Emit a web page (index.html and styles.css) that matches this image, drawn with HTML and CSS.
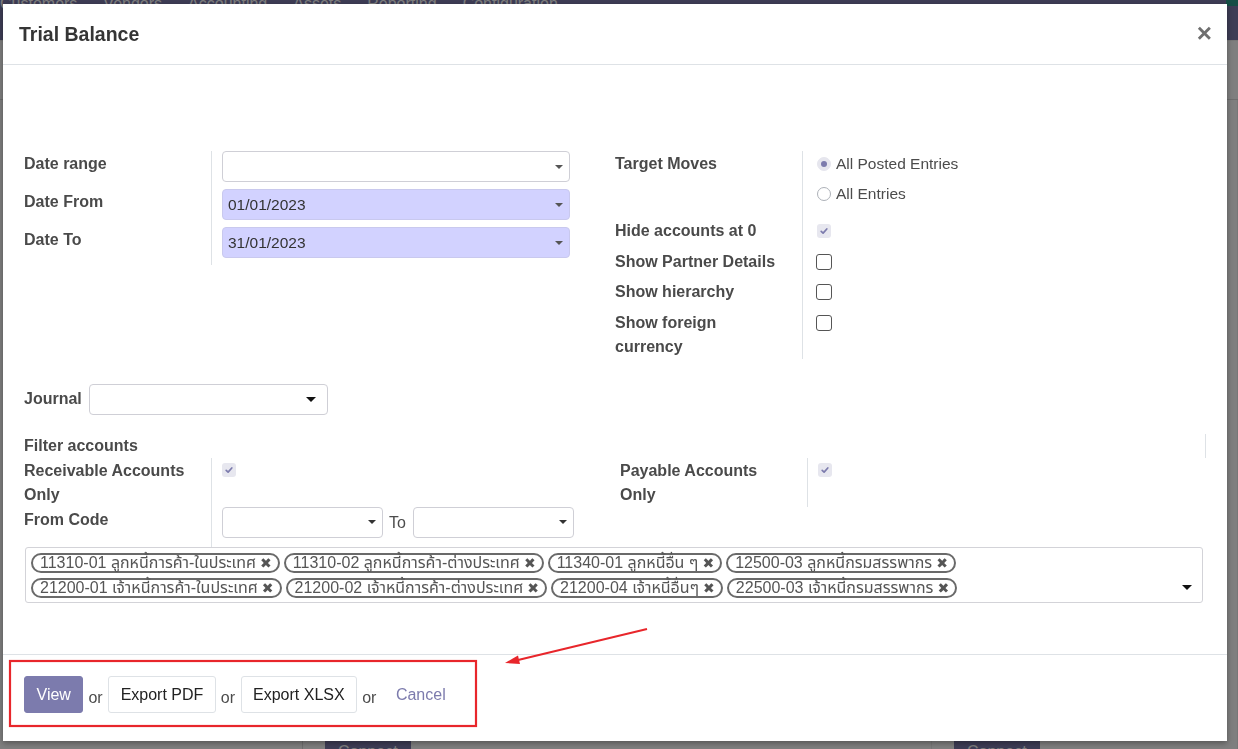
FILE: index.html
```html
<!DOCTYPE html>
<html lang="en">
<head>
<meta charset="utf-8">
<title>Trial Balance</title>
<link rel="stylesheet" href="styles.css">
</head>
<body>
<div class="app">
  <nav class="navbar">
    <ul class="menu">
      <li>Customers</li><li>Vendors</li><li>Accounting</li><li>Assets</li><li>Reporting</li><li>Configuration</li>
    </ul>
    <span class="avatar"></span>
  </nav>
  <div class="control-panel"></div>
  <div class="dashboard">
    <div class="side"></div>
    <div class="card"><span class="btn-connect">Connect</span></div>
    <div class="card"><span class="btn-connect">Connect</span></div>
  </div>
</div>
<div class="backdrop"></div>

<div class="modal" role="dialog">
  <header class="modal-header">
    <h4 class="modal-title">Trial Balance</h4>
    <button class="close" type="button">×</button>
  </header>

  <div class="modal-body">
    <div class="form-cols">
      <div class="group group-left">
        <label class="lbl">Date range</label>
        <div class="fld fld-input"><div class="select"><span class="val"></span><i class="caret"></i></div></div>
        <label class="lbl">Date From</label>
        <div class="fld fld-input"><div class="select date"><span class="val">01/01/2023</span><i class="caret"></i></div></div>
        <label class="lbl">Date To</label>
        <div class="fld fld-input"><div class="select date"><span class="val">31/01/2023</span><i class="caret"></i></div></div>
      </div>
      <div class="group group-right">
        <label class="lbl">Target Moves</label>
        <div class="fld fld-radios">
          <div class="radio-item"><span class="radio on"></span>All Posted Entries</div>
          <div class="radio-item"><span class="radio"></span>All Entries</div>
        </div>
        <label class="lbl">Hide accounts at 0</label>
        <div class="fld fld-cb"><span class="cb on"><svg viewBox="0 0 14 14"><path d="M4.2 7.3 L6.1 9.1 L9.8 5" fill="none" stroke="#7c7bad" stroke-width="1.7" stroke-linecap="round" stroke-linejoin="round"/></svg></span></div>
        <label class="lbl">Show Partner Details</label>
        <div class="fld fld-cb"><span class="cb"></span></div>
        <label class="lbl">Show hierarchy</label>
        <div class="fld fld-cb"><span class="cb"></span></div>
        <label class="lbl">Show foreign currency</label>
        <div class="fld fld-cb last"><span class="cb"></span></div>
      </div>
    </div>

    <div class="journal-row">
      <label class="lbl">Journal</label>
      <div class="select journal"><span class="val"></span><i class="caret dark"></i></div>
    </div>

    <div class="filter-title">
      <span class="lbl">Filter accounts</span>
      <span class="vsep"></span>
    </div>

    <div class="form-cols cols-2">
      <div class="group group-left2">
        <label class="lbl">Receivable Accounts Only</label>
        <div class="fld fld-cb2"><span class="cb on"><svg viewBox="0 0 14 14"><path d="M4.2 7.3 L6.1 9.1 L9.8 5" fill="none" stroke="#7c7bad" stroke-width="1.7" stroke-linecap="round" stroke-linejoin="round"/></svg></span></div>
        <label class="lbl">From Code</label>
        <div class="fld fld-code">
          <div class="select code"><span class="val"></span><i class="caret"></i></div>
          <span class="to">To</span>
          <div class="select code"><span class="val"></span><i class="caret"></i></div>
        </div>
      </div>
      <div class="group group-right2">
        <label class="lbl">Payable Accounts Only</label>
        <div class="fld fld-cb2"><span class="cb on"><svg viewBox="0 0 14 14"><path d="M4.2 7.3 L6.1 9.1 L9.8 5" fill="none" stroke="#7c7bad" stroke-width="1.7" stroke-linecap="round" stroke-linejoin="round"/></svg></span></div>
      </div>
    </div>

    <div class="tags-box">
      <div class="tag-rows">
        <div class="tag-row">
          <span class="tag">11310-01 ลูกหนี้การค้า-ในประเทศ <b>✖</b></span>
          <span class="tag">11310-02 ลูกหนี้การค้า-ต่างประเทศ <b>✖</b></span>
          <span class="tag">11340-01 ลูกหนี้อื่น ๆ <b>✖</b></span>
          <span class="tag">12500-03 ลูกหนี้กรมสรรพากร <b>✖</b></span>
        </div>
        <div class="tag-row">
          <span class="tag">21200-01 เจ้าหนี้การค้า-ในประเทศ <b>✖</b></span>
          <span class="tag">21200-02 เจ้าหนี้การค้า-ต่างประเทศ <b>✖</b></span>
          <span class="tag">21200-04 เจ้าหนี้อื่นๆ <b>✖</b></span>
          <span class="tag">22500-03 เจ้าหนี้กรมสรรพากร <b>✖</b></span>
        </div>
      </div>
      <i class="caret dark"></i>
    </div>
  </div>

  <footer class="modal-footer">
    <button class="btn btn-primary" type="button">View</button>
    <span class="or">or</span>
    <button class="btn btn-secondary" type="button">Export PDF</button>
    <span class="or">or</span>
    <button class="btn btn-secondary" type="button">Export XLSX</button>
    <span class="or">or</span>
    <a class="btn-link">Cancel</a>
  </footer>
</div>

<svg class="annotation" width="1238" height="749" viewBox="0 0 1238 749">
  <rect x="10" y="661" width="466" height="65" fill="none" stroke="#e8262b" stroke-width="2.2"/>
  <line x1="647" y1="629" x2="516" y2="660.5" stroke="#e8262b" stroke-width="2"/>
  <polygon points="505,663 520,664 518,655.5" fill="#e8262b"/>
</svg>
</body>
</html>
```

FILE: styles.css
```css
* { box-sizing: border-box; }

body {
  margin: 0;
  width: 1238px;
  height: 749px;
  overflow: hidden;
  font-family: "Liberation Sans", Arial, "Noto Sans Thai", "Noto Sans", "DejaVu Sans", sans-serif;
  font-size: 15.5px;
  color: #4c4c4c;
  background: #fff;
}

/* ---------- page behind the dialog ---------- */
.app {
  height: 749px;
  display: flex;
  flex-direction: column;
}
.navbar {
  height: 40px;
  background: #7c7bad;
  display: flex;
  justify-content: space-between;
  align-items: flex-start;
  flex: none;
}
.menu {
  list-style: none;
  margin: 0;
  padding: 0;
  display: flex;
  gap: 26px;
  color: #fff;
  font-size: 16px;
  line-height: 8px;
}
.avatar {
  width: 12px;
  height: 6px;
  background: #2c9c8c;
}
.control-panel {
  height: 60px;
  flex: none;
  border-bottom: 1px solid #ddd;
  border-top: 1px solid #eee;
}
.dashboard {
  flex: none;
  height: 669px;
  display: grid;
  grid-template-columns: 303px 629px 1fr;
}
.side { border-right: 1px solid #ddd; }
.card {
  display: flex;
  flex-direction: column;
  justify-content: flex-end;
  align-items: flex-start;
  padding-left: 22px;
  border-right: 1px solid #eee;
}
.btn-connect {
  height: 30px;
  padding: 4px 13px;
  background: #7c7bad;
  color: #fff;
  font-size: 16px;
}
.backdrop {
  position: fixed;
  inset: 0;
  background: rgba(0, 0, 0, 0.5);
}

/* ---------- dialog ---------- */
.modal {
  position: absolute;
  left: 3px;
  top: 4px;
  width: 1224px;
  height: 737px;
  background: #fff;
  display: flex;
  flex-direction: column;
  box-shadow: 0 2px 6px rgba(0, 0, 0, 0.35);
}
.modal-header {
  height: 61px;
  flex: none;
  display: flex;
  align-items: center;
  justify-content: space-between;
  padding: 0 15px 0 16px;
  border-bottom: 1px solid #dee2e6;
}
.modal-title {
  margin: 0;
  font-size: 19.5px;
  font-weight: bold;
  color: #353535;
}
.close {
  border: 0;
  background: none;
  padding: 0;
  font-family: "Liberation Sans", Arial, sans-serif;
  font-size: 26px;
  font-weight: bold;
  line-height: 1;
  color: #6f6f6f;
  margin-top: -2px;
}

.modal-body {
  flex: 1;
  padding: 86px 21px 0 21px;
}

.lbl {
  display: block;
  font-weight: bold;
  font-size: 16px;
  line-height: 24px;
  color: #4a4a4a;
  padding-right: 19px;
  padding-top: 1px;
}

.form-cols {
  display: grid;
  grid-template-columns: 591px 1fr;
}
.group {
  display: grid;
  grid-template-columns: 187px 1fr;
  align-content: start;
}
.group-left { padding-right: 45px; }

.fld {
  border-left: 1px solid #dee2e6;
  padding-left: 10px;
}
.fld-input { padding-bottom: 7px; }

.select {
  height: 31px;
  border: 1px solid #cfcfd6;
  border-radius: 4px;
  display: flex;
  align-items: center;
  justify-content: space-between;
  padding: 0 6px 0 5px;
  background: #fff;
  color: #333;
  font-size: 15.5px;
}
.select.date {
  background: #d2d2ff;
  border-color: #c9c9ee;
}
.caret {
  width: 0;
  height: 0;
  border-left: 4.5px solid transparent;
  border-right: 4.5px solid transparent;
  border-top: 4.5px solid #555;
}
.caret.dark { border-top-color: #111; }

/* right group */
.group-right .fld { padding-left: 13px; }
.fld-radios { padding-bottom: 7px; }
.radio-item {
  display: flex;
  align-items: center;
  gap: 5px;
  line-height: 24px;
  height: 30px;
  padding-bottom: 5px;
  padding-top: 1px;
  color: #4c4c4c;
}
.radio {
  width: 14px;
  height: 14px;
  margin-left: 1px;
  border-radius: 50%;
  border: 1px solid #adb1b8;
  background: #fff;
  display: flex;
  align-items: center;
  justify-content: center;
}
.radio.on {
  border-color: #e6e6ee;
  background: #e6e6ee;
}
.radio.on::after {
  content: "";
  width: 6px;
  height: 6px;
  border-radius: 50%;
  background: #7c7bad;
}
.fld-cb {
  height: 30.5px;
  display: flex;
  align-items: flex-start;
}
.fld-cb.last { height: auto; }
.cb {
  margin-top: 5px;
  width: 16px;
  height: 16px;
  border: 1.5px solid #555;
  border-radius: 3px;
  background: #fff;
}
.cb.on {
  margin-top: 6px;
  margin-left: 1px;
  width: 14px;
  height: 14px;
  border: 0;
  background: #e7e7ef;
  display: flex;
}
.cb.on svg { width: 14px; height: 14px; }

/* journal */
.journal-row {
  margin-top: 25px;
  display: flex;
  align-items: center;
  gap: 7px;
}
.journal-row .lbl { padding-right: 0; padding-top: 0; }
.select.journal {
  width: 239px;
  padding-right: 11px;
}
.select.journal .caret {
  border-left-width: 5px;
  border-right-width: 5px;
  border-top-width: 5px;
}

/* filter accounts */
.filter-title {
  margin-top: 18px;
  display: flex;
  justify-content: space-between;
}
.vsep {
  width: 1px;
  height: 24px;
  margin-top: 1px;
  background: #dee2e6;
}

.cols-2 {
  grid-template-columns: 596px 1fr;
}
.fld-cb2 { display: flex; align-items: flex-start; }
.fld-cb2 .cb.on { margin-top: 5px; margin-left: 0; }
.group-right2 .fld-cb2 { height: 49px; }
.fld-code {
  display: flex;
  align-items: center;
  gap: 6px;
  padding-bottom: 9px;
}
.select.code { width: 161px; }
.select.code:last-child { margin-left: 1px; }
.select.code .caret { border-top-color: #333; }
.to { color: #4c4c4c; font-size: 16px; padding-top: 2px; }

/* tags */
.tags-box {
  margin: 0 3px 0 1px;
  border: 1px solid #d3d3d8;
  border-radius: 3px;
  padding: 5px 10px 4px 5px;
  display: flex;
  align-items: flex-end;
}
.tag-rows {
  flex: 1;
  display: flex;
  flex-direction: column;
  gap: 5px;
}
.tag-row {
  display: flex;
  gap: 4px;
}
.tag {
  height: 20px;
  display: inline-flex;
  align-items: center;
  gap: 4px;
  border: 2px solid #6a6a6a;
  border-radius: 10px;
  padding: 0 6px 0 7px;
  font-size: 16px;
  line-height: 16px;
  color: #555;
  white-space: nowrap;
}
.tag b {
  font-size: 14px;
  color: #555;
}
.tags-box .caret {
  margin-bottom: 8px;
  border-left-width: 5px;
  border-right-width: 5px;
  border-top-width: 5px;
}

/* footer */
.modal-footer {
  flex: none;
  height: 87px;
  border-top: 1px solid #dee2e6;
  display: flex;
  align-items: flex-start;
  padding: 21px 21px 0;
}
.btn {
  height: 37px;
  padding: 0 11.5px;
  border-radius: 3px;
  font-family: inherit;
  font-size: 16px;
  border: 1px solid #dee2e6;
}
.btn-primary {
  background: #7c7bad;
  border-color: #7c7bad;
  color: #fff;
}
.btn-secondary {
  background: #fff;
  color: #222;
}
.or {
  margin: 0 5.5px 0 5px;
  font-size: 16px;
  line-height: 43px;
  color: #4c4c4c;
}
.btn-link {
  padding: 0 12px 0 14px;
  line-height: 37px;
  font-size: 16px;
  color: #7c7bad;
}

.annotation {
  position: absolute;
  left: 0;
  top: 0;
  pointer-events: none;
}
```
